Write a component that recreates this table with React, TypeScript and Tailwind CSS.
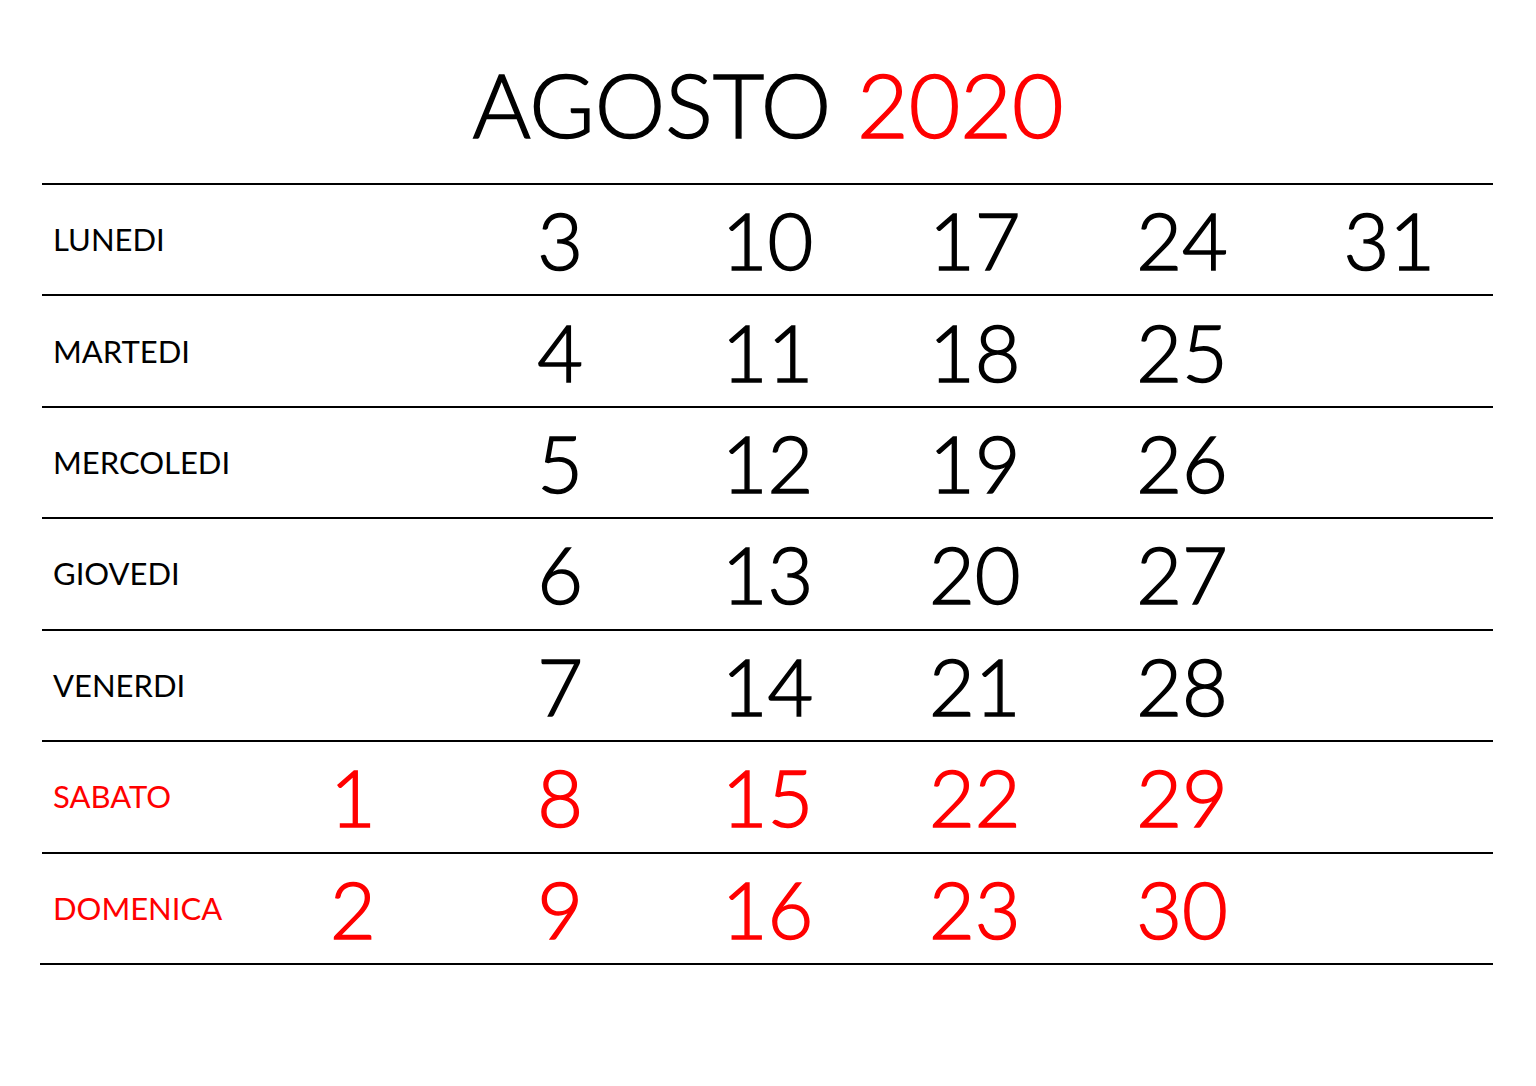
import React from "react";

const rows: { label: string; red: boolean; days: (number | null)[] }[] = [
  { label: "LUNEDI", red: false, days: [null, 3, 10, 17, 24, 31] },
  { label: "MARTEDI", red: false, days: [null, 4, 11, 18, 25, null] },
  { label: "MERCOLEDI", red: false, days: [null, 5, 12, 19, 26, null] },
  { label: "GIOVEDI", red: false, days: [null, 6, 13, 20, 27, null] },
  { label: "VENERDI", red: false, days: [null, 7, 14, 21, 28, null] },
  { label: "SABATO", red: true, days: [1, 8, 15, 22, 29, null] },
  { label: "DOMENICA", red: true, days: [2, 9, 16, 23, 30, null] },
];

export default function App() {
  return (
    <div className="w-[1536px] h-[1086px] bg-white overflow-hidden">
      <div
        className="h-[183px] flex justify-center items-start pt-[59px] text-[89px] leading-none font-light [-webkit-text-stroke:1.5px_currentColor]"
        style={{ fontFamily: "Lato, 'Liberation Sans', sans-serif" }}
      >
        <span className="text-black">AGOSTO</span>
        <span className="text-[#ff0000] ml-[26px]">2020</span>
      </div>
      <div className="ml-[42px] w-[1451px]">
        {rows.map((r) => (
          <div
            key={r.label}
            className="h-[111.43px] border-t-2 border-black grid grid-cols-7 items-center"
          >
            <div
              className={`pl-[11px] text-[31px] leading-none ${r.red ? "text-[#ff0000]" : "text-black"}`}
              style={{ fontFamily: "Lato, 'Open Sans', sans-serif" }}
            >
              {r.label}
            </div>
            {r.days.map((d, i) => (
              <div
                key={i}
                className={`text-center text-[79px] leading-none font-light [-webkit-text-stroke:1.5px_currentColor] ${r.red ? "text-[#ff0000]" : "text-black"}`}
                style={{ fontFamily: "Lato, 'Liberation Sans', sans-serif" }}
              >
                {d ?? ""}
              </div>
            ))}
          </div>
        ))}
        <div className="border-t-2 border-black ml-[-2px]" />
      </div>
    </div>
  );
}
